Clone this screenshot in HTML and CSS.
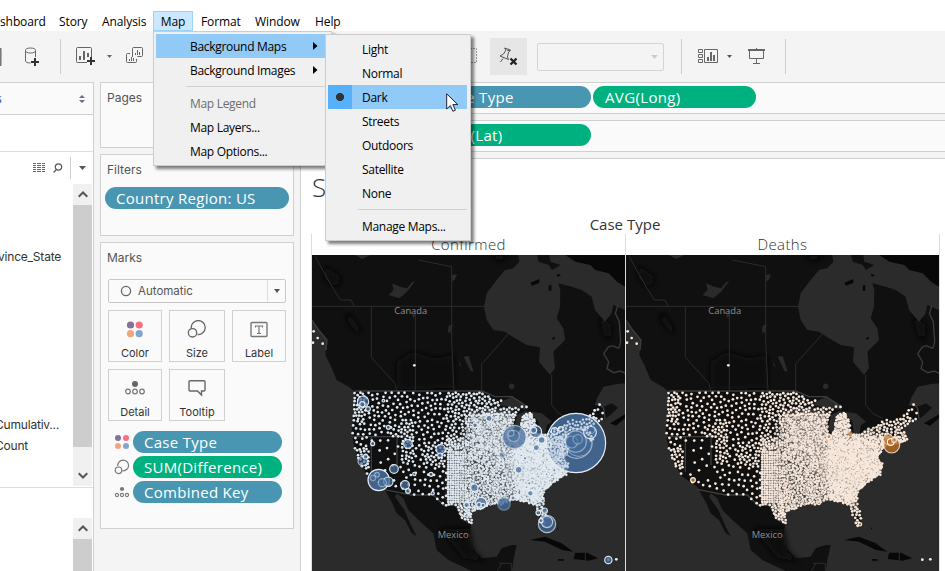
FILE: index.html
```html
<!DOCTYPE html>
<html lang="en">
<head>
<meta charset="utf-8">
<title>Worksheet</title>
<link rel="stylesheet" href="styles.css">
</head>
<body>
<div class="app">
  <nav class="menubar">
    <span class="m-dash">shboard</span><span class="m-story">Story</span><span class="m-analysis">Analysis</span><span class="m-map">Map</span><span class="m-format">Format</span><span class="m-window">Window</span><span class="m-help">Help</span>
  </nav>

  <div class="toolbar">
    <svg class="tool-cut" width="2" height="18"><path d="M0 .5H1V17.5H0" fill="#888" stroke="#666"/></svg>
    <svg class="tool-db" width="16" height="20" fill="none" stroke="#666"><ellipse cx="5.5" cy="3.5" rx="5" ry="2.5"/><path d="M.5 3.5V14c0 1 2 2 5 2M10.500 3.500V10"/><path d="M10 11v8M6 15h8" stroke="#333" stroke-width="2"/></svg>
    <i class="divider d1"></i>
    <svg class="tool-new" width="20" height="19" fill="none" stroke="#666"><path d="M11 15.500H1.500a1 1 0 0 1-1-1V1.500a1 1 0 0 1 1-1h13a1 1 0 0 1 1 1V10"/><path d="M4 13V9M8 13V4M12 10V6" stroke-width="2"/><path d="M15 10v8M11 14h8" stroke="#333" stroke-width="2"/></svg>
    <svg class="caret c1" width="5" height="3"><path d="M0 0h5L2.500 3z" fill="#666"/></svg>
    <svg class="tool-dup" width="18" height="17" fill="none" stroke="#666"><path d="M6.500 10V1.500a1 1 0 0 1 1-1h8a1 1 0 0 1 1 1v7a1 1 0 0 1-1 1h-4M4 6.500H1.500a1 1 0 0 0-1 1v7a1 1 0 0 0 1 1h8a1 1 0 0 0 1-1V12M3.500 14v-2M5.500 14v-4M7.500 14v-3M9.500 8V6M11.500 8V3M13.500 8V5"/></svg>
    <svg class="tool-dash" width="8" height="16" fill="none" stroke="#999"><path d="M0 .5H6.500V14.500H0" stroke-dasharray="2 1"/></svg>
    <span class="pin"><svg width="20" height="20" fill="none" stroke="#555"><path d="M5.500 1l6 2-1 1.500-1 .5-1 5 1 2.500L1 9l3.500-2L7 3zM4 11.500L1.500 15M8 3l3 1"/><path d="M11.500 11.500l6 6M17.500 11.500l-6 6" stroke="#222" stroke-width="2.300"/></svg></span>
    <span class="combo"><svg width="7" height="4"><path d="M0 0h7L3.500 4z" fill="#ccc"/></svg></span>
    <i class="divider d2"></i>
    <svg class="tool-show" width="21" height="15" fill="none" stroke="#666"><path d="M.5.500h4v3h-4zM.5 5.500h4v3h-4zM.5 10.500h4v3h-4zM6.500.500h13v13h-13z"/><path d="M10 12V8M13 12V3M16 12V6" stroke-width="2"/></svg>
    <svg class="caret c2" width="5" height="3"><path d="M0 0h5L2.500 3z" fill="#555"/></svg>
    <svg class="tool-present" width="18" height="17" fill="none" stroke="#666"><path d="M0 2h17" stroke-width="2"/><path d="M8.500 0v1M1.500 3v7.500h14V3M8.500 10.500V15M5 15.500h7"/></svg>
    <i class="divider d3"></i>
  </div>

  <main class="body">
    <aside class="data">
      <div class="source"><span>s</span><svg width="7" height="8" fill="#666e80"><path d="M0 3L3 0l3 3zM0 5h6L3 8z"/></svg></div>
      <div class="blank"></div>
      <div class="find">
        <svg width="12" height="10" fill="#666"><path d="M0 0h3v1H0zM4 0h4v1H4zM9 0h3v1H9zM0 2h3v1H0zM4 2h4v1H4zM9 2h3v1H9zM0 4h3v1H0zM4 4h4v1H4zM9 4h3v1H9zM0 6h3v1H0zM4 6h4v1H4zM9 6h3v1H9zM0 8h3v1H0zM4 8h4v1H4zM9 8h3v1H9z"/></svg>
        <svg class="lens" width="10" height="10" fill="none" stroke="#555" stroke-width="1.200"><circle cx="5.500" cy="4" r="3.200"/><path d="M3.500 6.500L.5 9.500"/></svg>
        <i></i>
        <svg class="fcaret" width="7" height="4"><path d="M0 0h7L3.500 4z" fill="#555"/></svg>
      </div>
      <div class="fields">
        <div class="names"><span class="n1">vince_State</span><span class="n2">Cumulativ...</span><span class="n3">Count</span></div>
        <div class="scroll">
          <span><svg width="10" height="7" fill="none" stroke="#555" stroke-width="2"><path d="M.7 5.700L5 1.500l4.300 4.200"/></svg></span><b></b><span class="down"><svg width="10" height="7" fill="none" stroke="#555" stroke-width="2"><path d="M.7 1.300L5 5.500l4.300-4.200"/></svg></span>
        </div>
      </div>
      <div class="params"><div class="scroll">
        <span><svg width="10" height="7" fill="none" stroke="#555" stroke-width="2"><path d="M.7 5.700L5 1.500l4.300 4.200"/></svg></span><b></b>
      </div></div>
    </aside>

    <section class="cards">
      <div class="card pages"><h4>Pages</h4></div>
      <div class="card filters"><h4>Filters</h4><div class="pill blue">Country Region: US</div></div>
      <div class="card marks">
        <h4>Marks</h4>
        <div class="marktype"><svg width="12" height="12" fill="none" stroke="#666" stroke-width="1.300"><circle cx="6" cy="6" r="4.600"/></svg><span>Automatic</span><em><svg width="6" height="4"><path d="M0 0h6L3 4z" fill="#555"/></svg></em></div>
        <div class="buttons">
          <div class="btn"><svg width="18" height="20"><circle cx="4.500" cy="5" r="3.600" fill="#857096"/><circle cx="13.200" cy="5" r="3.600" fill="#fa7080"/><circle cx="4.500" cy="13.700" r="3.600" fill="#f4a57c"/><circle cx="13.200" cy="13.700" r="3.600" fill="#82a5cd"/></svg><span>Color</span></div>
          <div class="btn"><svg width="20" height="20" fill="none" stroke="#666" stroke-width="1.300"><path d="M4.300 8.500A7 7 0 1 1 10.500 14.500"/><circle cx="5.500" cy="12.800" r="4.200"/></svg><span>Size</span></div>
          <div class="btn"><svg width="18" height="20" fill="none" stroke="#777" stroke-width="1.400"><rect x="1" y="2.500" width="16" height="14" rx="1"/><path d="M5.500 7.500V6h7v1.500M9 6v7.500M7 13.500h4" stroke-width="1.200"/></svg><span>Label</span></div>
          <div class="btn"><svg width="20" height="20" fill="none" stroke="#777" stroke-width="1.200"><circle cx="10" cy="5" r="3" fill="#666" stroke="none"/><circle cx="3" cy="12.500" r="2.300"/><circle cx="10" cy="12.500" r="2.300"/><circle cx="17" cy="12.500" r="2.300"/></svg><span>Detail</span></div>
          <div class="btn"><svg width="18" height="20" fill="none" stroke="#666" stroke-width="1.400"><path d="M2 1.700h14a1 1 0 0 1 1 1V11a1 1 0 0 1-1 1h-2.500v4L9.500 12H2a1 1 0 0 1-1-1V2.700a1 1 0 0 1 1-1z"/></svg><span>Tooltip</span></div>
        </div>
        <div class="enc"><svg width="16" height="16"><circle cx="4" cy="4" r="3" fill="#857096"/><circle cx="12" cy="4" r="3" fill="#fa7080"/><circle cx="4" cy="12" r="3" fill="#f4a57c"/><circle cx="12" cy="12" r="3" fill="#82a5cd"/></svg><div class="pill blue">Case Type</div></div>
        <div class="enc"><svg width="16" height="16" fill="none" stroke="#777" stroke-width="1.200"><path d="M3.800 7A5.400 5.400 0 1 1 8.500 11.800"/><circle cx="4.500" cy="11.300" r="3.300"/></svg><div class="pill green">SUM(Difference)</div></div>
        <div class="enc"><svg width="16" height="16" fill="none" stroke="#777" stroke-width="1.100"><circle cx="8" cy="5" r="2.100" fill="#777" stroke="none"/><circle cx="3" cy="11" r="1.600"/><circle cx="8" cy="11" r="1.600"/><circle cx="13" cy="11" r="1.600"/></svg><div class="pill blue">Combined Key</div></div>
      </div>
    </section>

    <section class="work">
      <div class="shelf"><div class="pill blue">Case Type</div><div class="pill green">AVG(Long)</div></div>
      <div class="shelf"><div class="pill green">AVG(Lat)</div></div>
      <div class="sheet">
        <h1>S</h1>
        <h2>Case Type</h2>
        <div class="panes">
          <div class="pane"><h3>Confirmed</h3><svg id="confirmed" viewBox="0 0 939 948"></svg></div>
          <div class="pane"><h3>Deaths</h3><svg id="deaths" viewBox="0 0 939 948"></svg></div>
        </div>
      </div>
    </section>
  </main>

  <div class="menu main">
    <div class="item hot">Background Maps<svg width="5" height="8"><path d="M0 0l4.500 4L0 8z"/></svg></div>
    <div class="item">Background Images<svg width="5" height="8"><path d="M0 0l4.500 4L0 8z"/></svg></div>
    <hr>
    <div class="item off">Map Legend</div>
    <div class="item">Map Layers...</div>
    <div class="item">Map Options...</div>
  </div>
  <div class="menu sub">
    <div class="item">Light</div>
    <div class="item">Normal</div>
    <div class="item hot"><i></i>Dark</div>
    <div class="item">Streets</div>
    <div class="item">Outdoors</div>
    <div class="item">Satellite</div>
    <div class="item">None</div>
    <hr>
    <div class="item">Manage Maps...</div>
  </div>
  <svg class="cursor" width="13" height="20"><path d="M.7.800V16l3.600-3.400 2.600 5.700 2.500-1.100-2.500-5.600h4.900z" fill="#fff" stroke="#223" stroke-width="1"/></svg>
</div>
<script src="map.js"></script>
</body>
</html>
```
FILE: map.js
```js
// Map geometry is stored at three units per pixel.
const land = 'M0 0H939V385L915 387 875 395 855 430 850 450 875 455 900 445 918 458 895 480 879 492 850 505 829 520 829 535 844 555 815 565 774 575 754 610 769 625 764 660 719 685 694 715 694 745 707 785 699 815 674 775 669 750 639 740 599 735 574 750 539 747 509 760 479 775 479 805 471 845 484 885 509 910 554 905 569 880 599 870 614 870 604 915 600 948H479L409 915 374 885 364 835 319 795 289 765 274 730 254 715 249 725 277 765 299 815 314 843 299 835 279 795 254 775 241 745 219 705 214 695 169 665 144 625 129 585 119 535 126 465 129 410 110 395 74 375 55 330 40 300 45 255 20 225 0 195Z';
const water = [
  'M619 0L622 20 604 40 579 45 554 75 524 115 516 155 524 195 544 225 579 230 609 250 644 270 684 277 681 320 714 360 729 340 724 290 759 255 754 220 734 190 744 155 745 105 739 85 779 95 809 105 839 125 849 165 879 200 899 175 904 150 939 165V0H712L715 20 745 30 720 45 710 30 680 20 675 0Z',
  'M229 120L245 105 240 85 265 95 285 100 300 82 310 78 285 110 262 130Z',
  'M420 60L435 58 428 75 420 78Z','M410 212L422 208 415 235 408 230Z','M300 180L315 175 305 190Z',
  'M455 305L470 303 485 350 475 347ZM440 315L448 335 443 333Z','M592 390a8 8 0 1 1 14 8a8 8 0 1 1-14-8',
  'M559 450L579 435 599 425 629 440 649 465 619 460 589 455Z',
  'M619 540L607 520 615 480 640 468 652 470 633 490 626 535Z',
  'M655 470L690 475 720 500 705 510 700 535 684 540 679 500Z',
  'M684 545L715 535 725 530 715 550 694 552ZM740 515L770 508 778 513 745 523Z',
  'M130 0L175 0 150 12Z'
];
const islands = [
  'M760 0L939 0V95L915 80 890 55 850 45 835 30 790 20Z',
  'M655 83L682 72 682 84 660 92ZM710 92l8-3v18h-8ZM720 250l8-5v8h-8ZM735 56l12 4-10 6Z',
  'M894 505L939 478V490L912 512Z',
  'M654 855L699 845 749 865 784 890 750 885 699 860ZM789 893L825 893 859 910 830 917 785 912ZM738 912l18 1v4h-18ZM735 815l4 8h-4Z'
];
const inlets = 'M855 55l45 40-6 5-42-38ZM775 25l50 12-5 20-40-6ZM900 100l30 20-5 30-20-15Z';
const borders = 'M0 154H519M178 154V307L249 385 254 407M310 180V407M319 15L419 35V255L426 407M591 235L509 327V407M719 360V450L740 475 770 490M10 5L54 85 85 135H117L127 154M560 925H598V948M820 890V917M555 950L570 925';
const usBorder = 'M129 408H509L549 425 600 425 645 455M214 703L299 720 364 720 395 750 430 750 455 795 479 805M850 450l10-5 15 15 4 32M0 195L20 225 45 255 42 285M119 545H310M178 545V650M255 545V630';
const shade = ['M255 320L300 290 370 310 425 300 425 400 255 405Z','M110 170l40 60-15 5-35-45Z','M40 30l50 40-20 30-35-30Z','M560 20l50-20h-80Z','M620 90l30 10-20 20Z','M860 180l40 30-5 50-20-20Z','M380 820l90 0 15 70 40 30-70-10Z'];
const us = [[127,413],[509,413],[539,430],[574,437],[559,455],[579,460],[619,455],[649,455],[619,470],[605,490],[605,535],[619,543],[626,515],[632,480],[659,473],[671,505],[674,535],[699,540],[724,520],[754,515],[769,497],[829,487],[844,470],[854,447],[867,447],[879,487],[849,505],[829,520],[844,555],[814,565],[774,575],[754,610],[769,625],[764,660],[719,685],[694,715],[694,745],[707,785],[694,815],[678,780],[669,750],[639,740],[599,735],[574,750],[539,747],[509,760],[479,775],[479,805],[449,790],[434,750],[404,753],[384,745],[364,720],[299,720],[249,700],[214,695],[169,665],[144,625],[129,585],[119,535],[126,465]];

let seed = 20200412;
function rand() {
  seed = (seed * 1664525 + 1013904223) >>> 0;
  return seed / 4294967296;
}
function inside(x, y) {
  let hit = false;
  for (let i = 0, j = us.length - 1; i < us.length; j = i++) {
    const [a, b] = us[i], [c, d] = us[j];
    if ((b > y) !== (d > y) && x < (c - a) * (y - b) / (d - b) + a) hit = !hit;
  }
  return hit;
}
function spacing(x, y) {
  if (x > 848 && y < 490) return 14;
  if (x > 560 && y < 475 && x < 645) return 9;
  if (x > 700 && y < 545) return 7.500;
  if (x > 670 && y > 740) return 7.500;
  if (x > 610) return 4.900;
  if (x > 462) return y < 480 - (x - 462) * .1 ? 8.500 : 5.800;
  if (x > 402) return y > 550 ? 6.500 : 9;
  if (x > 335 && y > 560 && y < 630) return 8.500;
  if (x > 270 && x < 305 && y > 490 && y < 620) return 8.500;
  if (x > 235 && x < 270 && y > 505 && y < 545) return 9;
  if (x > 170 && x < 270 && y > 540 && y < 680) return 23;
  if (x < 160 && y < 500) return 7.500;
  if (x < 190 && y > 580 && y < 640) return 7.500;
  if (y > 640) return 15;
  return 12.500;
}
const dots = [], cells = new Map();
function add(x, y, r) {
  const cx = Math.floor(x / 24), cy = Math.floor(y / 24);
  for (let i = -1; i < 2; i++) for (let j = -1; j < 2; j++)
    for (const p of cells.get((cx + i) + ',' + (cy + j)) || [])
      if ((p[0] - x) ** 2 + (p[1] - y) ** 2 < r * r) return;
  const key = cx + ',' + cy;
  if (!cells.has(key)) cells.set(key, []);
  cells.get(key).push([x, y]);
  dots.push([x, y]);
}
// Plains counties sit on a near-regular grid.
for (let y = 590; y < 745; y += 7.5) for (let x = 408; x < 462; x += 7.5) if (inside(x, y)) add(x + rand(), y + rand() * 1.5, 5);
for (let i = 0; i < 60000; i++) {
  const x = 115 + rand() * 770, y = 410 + rand() * 410;
  if (inside(x, y)) add(x, y, spacing(x, y));
}
dots.push([5,229],[17,249],[3,263],[32,266],[307,331],[913,913],[889,914]);

// Small gaps of basemap that show between the packed eastern counties.
const gaps = [];
while (gaps.length < 900) {
  const x = 440 + rand() * 320, y = 480 + rand() * 270;
  if (inside(x, y) && (x < 600 || rand() < .4)) gaps.push([x, y]);
}

function circles(list, r) {
  return list.map(p => '<circle cx="' + p[0].toFixed(1) + '" cy="' + p[1].toFixed(1) + '" r="' + (r || (p[0] > 462 ? 4.2 : 4.1)) + '"/>').join('');
}
function draw(id, light, fill, ring, bubbles) {
  let s = '<defs><clipPath id="' + id + 'Us"><path d="M' + us.map(p => p.join(' ')).join('L') + 'Z"/></clipPath><filter id="' + id + 'Soft"><feGaussianBlur stdDeviation="9"/></filter></defs>';
  s += '<rect width="939" height="948" fill="#2b2b2b"/><path fill="#101010" d="' + land + '"/>';
  s += '<path fill="#080808" filter="url(#' + id + 'Soft)" d="' + shade.join('') + '"/>';
  s += water.map(d => '<path fill="#2b2b2b" d="' + d + '"/>').join('');
  s += islands.map(d => '<path fill="#080808" d="' + d + '"/>').join('');
  s += '<path fill="#2b2b2b" d="' + inlets + '"/>';
  s += '<path fill="none" stroke="#2c2c2c" stroke-width="3" d="' + borders + '"/>';
  s += '<path fill="none" stroke="#3d3d3d" stroke-width="4" d="' + usBorder + '"/>';
  s += '<path fill="none" stroke="#3b3b3b" stroke-width="4" d="M918 150l-8 25 12 25 4 60-5 20M921 280l-20-8-12 4-14 20 15 25-5 20 20 12 20-5 20 10"/>';
  s += '<text x="247" y="178">Canada</text><text x="377" y="848">Mexico</text>';
  s += '<g fill="' + light + '">' + circles(dots) + '</g>';
  s += '<g clip-path="url(#' + id + 'Us)" fill="' + light + '"><g filter="url(#' + id + 'Soft)">';
  s += '<path fill-opacity=".25" d="M410 560L455 550 470 475 560 465 730 520 790 560 700 770 560 770 455 800 410 745Z"/>';
  s += '<path fill-opacity=".3" d="M490 480L600 475 610 540 700 545 780 580 780 640 700 700 680 745 600 735 560 640 500 600Z"/>';
  s += '<path fill-opacity=".5" d="M600 560L700 550 760 590 770 640 690 700 680 745 640 730 590 640Z"/></g></g>';
  s += '<g fill="#20242a" fill-opacity=".38">' + gaps.map(p => '<rect x="' + p[0].toFixed(1) + '" y="' + p[1].toFixed(1) + '" width="3" height="3"/>').join('') + '</g>';
  s += bubbles.map(b => '<circle cx="' + b[0] + '" cy="' + b[1] + '" r="' + b[2] + '" fill="' + fill + '" fill-opacity="' + (b[3] || .75) + '" stroke="' + ring + '" stroke-width="3.5" stroke-opacity="' + (b[4] || .95) + '"/>').join('');
  // Counties that sit above the largest bubbles in the northeast.
  if (id === 'confirmed') s += '<g fill="' + light + '" fill-opacity=".8">' + circles(dots.filter(p => p[0] > 705 && p[0] < 850 && p[1] < 640 && (p[0] - 798) ** 2 + (p[1] - 560) ** 2 > 1300), 3.6) + '</g>';
  document.getElementById(id).innerHTML = s;
}
const confirmed = [[813,189,89,.88,1],[815,190,45,.5,.55],[822,189,40,.4,.4],[812,185,32,.6,.5],[800,186,18,.6,.4],[818,178,14,.6,.4],[855,157,19],[858,150,11,.7,.4],[776,217,12,.7,.6],[628,171,35,.75,.55],[626,168,17,.6,.4],[618,160,9,.6,.4],[692,155,18],[686,151,9],[710,180,10],[174,65,17],[172,73,8],[189,87,7],[173,243,14,.6,.7],[182,230,7],[221,300,32,.88,1],[250,305,14],[232,308,12,.7,.5],[216,284,7,.7,.5],[204,294,8,.6,.4],[267,267,13],[300,315,13],[309,333,7],[309,192,13],[407,208,14],[405,226,7],[528,369,17],[522,374,7],[534,376,6],[597,372,19,.8,.3],[485,375,8],[508,323,11],[726,432,26,.7,.7],[726,426,17,.8,.7],[719,392,8],[700,398,7],[708,422,6],[641,269,10],[694,203,9],[592,225,9,.5,.5],[552,115,9],[510,136,7],[250,142,6],[203,191,6],[732,195,7],[749,153,10],[767,147,7],[676,340,8],[598,287,6],[548,328,6],[624,354,6],[910,540,11],[383,340,5],[378,283,6],[713,362,5],[328,282,5],[673,310,5],[700,290,4],[748,271,5],[535,220,5],[467,243,5],[660,235,5],[568,160,4],[487,188,4],[725,283,4],[702,318,4],[570,328,4],[235,62,4]].map(b => [b[0] - 21, b[1] + 375, ...b.slice(2)]);
const deaths = [[815,195,24,.85,.8],[805,178,15,.65,.4],[812,186,10,.5,1],[822,180,7,.6,.8],[690,162,7,.7,.3],[627,170,6],[219,300,7,.9,1],[720,433,5],[597,370,4],[850,163,5,.4,.5]].map(b => [b[0] - 18, b[1] + 375, ...b.slice(2)]);
draw('confirmed', '#e1e9f1', '#466c9a', '#e6eef7', confirmed);
draw('deaths', '#f7e8dc', '#b36a24', '#fff0e0', deaths);
```
FILE: styles.css
```css
* { box-sizing: border-box; }
body { margin: 0; overflow: hidden; font-family: "Open Sans", sans-serif; font-size: 12px; color: #000; }
h1, h2, h3, h4 { margin: 0; font-weight: 400; }
svg { display: block; flex: none; }
.app { position: relative; width: 945px; height: 571px; background: #fff; display: flex; flex-direction: column; overflow: hidden; }

.menubar { height: 31px; padding-top: 11px; display: flex; flex: none; line-height: 21px; white-space: nowrap; letter-spacing: -.1px; }
.menubar span { flex: none; }
.m-dash { width: 59px; }
.m-story { width: 43px; }
.m-analysis { width: 51px; }
.m-map { width: 40px; height: 20px; line-height: 19px; text-align: center; background: #cce8ff; border: 1px solid #99d1ff; }
.m-format { width: 62px; padding-left: 8px; }
.m-window { width: 60px; }
.m-help { width: 40px; }

.toolbar { height: 51px; flex: none; background: #f4f4f4; display: flex; align-items: center; }
.tool-db { margin-left: 23px; }
.divider { width: 1px; height: 35px; background: #ccc; flex: none; }
.d1 { margin-left: 19px; }
.tool-new { margin-left: 15px; }
.c1 { margin-left: 11px; }
.tool-dup { margin-left: 14px; margin-top: -3px; }
.tool-dash { margin-left: 326px; margin-top: -2px; }
.pin { width: 37px; height: 37px; margin-left: 12px; background: #e6e6e6; display: flex; align-items: center; justify-content: center; }
.combo { width: 127px; height: 28px; margin-left: 10px; border: 1px solid #d4d4d4; border-radius: 2px; display: flex; align-items: center; justify-content: flex-end; padding-right: 5px; }
.d2 { margin-left: 17px; }
.tool-show { margin-left: 16px; }
.c2 { margin-left: 8px; }
.tool-present { margin-left: 16px; }
.d3 { margin-left: 19px; }

.body { flex: 1; display: flex; min-height: 0; background: #f4f4f4; }
.data { width: 94px; flex: none; background: #fff; border-right: 1px solid #d0d0d0; display: flex; flex-direction: column; }
.source { height: 33px; flex: none; border-top: 1px solid #d0d0d0; border-bottom: 1px solid #d0d0d0; background: #fafafa; display: flex; align-items: center; justify-content: space-between; padding-right: 7px; color: #2a3fa0; }
.source span { margin-left: -4px; }
.blank { height: 37px; flex: none; border-bottom: 1px solid #ddd; }
.find { height: 32px; flex: none; display: flex; align-items: center; padding-left: 33px; }
.find i { width: 1px; height: 22px; background: #ccc; margin-left: 7px; }
.lens { margin-left: 8px; }
.fcaret { margin-left: 8px; }
.fields { height: 304px; flex: none; border-bottom: 1px solid #ddd; display: flex; justify-content: space-between; padding-bottom: 1px; }
.names { width: 73px; padding-top: 64px; display: flex; flex-direction: column; font: 12px/18px Inter, sans-serif; letter-spacing: -.2px; color: #333; white-space: nowrap; }
.n1 { margin-left: -2px; }
.n2 { margin: 150px 0 3px -5px; }
.n3 { margin-left: -5px; }
.scroll { width: 20px; border-right: 1px solid #fff; background: #f0f0f0; display: flex; flex-direction: column; }
.scroll span { height: 21px; flex: none; display: flex; align-items: center; justify-content: center; }
.scroll b { flex: 1; background: #cdcdcd; }
.scroll .down { height: 39px; align-items: flex-end; padding-bottom: 7px; }
.params { flex: 1; padding-top: 30px; display: flex; justify-content: flex-end; min-height: 0; }

.cards { width: 206px; flex: none; padding: 0 6px; display: flex; flex-direction: column; gap: 6px; }
.card { border: 1px solid #d0d0d0; background: #fafafa; flex: none; padding: 5px 4px 0; color: #555; }
.card h4 { font: 12px/20px Inter, sans-serif; font-weight: 400; padding-left: 2px; }
.pages { height: 66px; }
.filters { height: 82px; }
.filters .pill { margin-top: 7px; width: 184px; }
.marks { height: 287px; }
.pill { height: 22px; line-height: 23px; border-radius: 11px; padding-left: 11px; color: #fff; font-size: 15px; letter-spacing: .28px; white-space: nowrap; }
.blue { background: #4996b2; }
.green { background: #00b180; }
.marktype { margin: 11px 3px 0; height: 24px; border: 1px solid #c8c8c8; border-radius: 2px; display: flex; align-items: center; padding-left: 11px; font: 11.5px Inter, sans-serif; }
.marktype span { margin-left: 6px; flex: 1; }
.marktype em { width: 18px; height: 22px; border-left: 1px solid #ddd; display: flex; align-items: center; justify-content: center; }
.buttons { margin: 7px 3px 10px; display: grid; grid-template-columns: 54px 56px 54px; column-gap: 7px; row-gap: 7px; }
.btn { height: 52px; border: 1px solid #d0d0d0; display: flex; flex-direction: column; align-items: center; padding-top: 9px; font: 11px/16px Inter, sans-serif; color: #333; }
.btn span { margin-top: 5px; }
.enc { display: flex; align-items: center; margin: 0 0 3px 8px; gap: 3px; }
.enc svg { margin-left: 1px; }
.enc .pill { width: 149px; }

.work { flex: 1; display: flex; flex-direction: column; min-width: 0; }
.shelf { height: 32px; margin-bottom: 6px; flex: none; border: solid #d0d0d0; border-width: 1px 0; background: #fafafa; display: flex; gap: 2px; padding: 3px 0 0 128px; }
.shelf .pill { width: 163px; padding-left: 12px; letter-spacing: .36px; }
.sheet { flex: 1; background: #fff; border: solid #d0d0d0; border-width: 1px 0 0 1px; display: flex; flex-direction: column; }
h1 { font-size: 26px; font-weight: 300; line-height: 34px; height: 55px; padding: 11px 0 0 11px; color: #333; }
h2 { font-size: 15px; line-height: 20px; text-align: center; width: 648px; color: #333; }
.panes { display: flex; margin-left: 10px; width: 629px; border-right: 1px solid #ddd; }
.pane { width: 314px; border-left: 1px solid #ddd; }
h3 { height: 21px; line-height: 20px; font-size: 15px; font-weight: 300; letter-spacing: .4px; text-align: center; color: #333; }
.pane svg { width: 313px; height: 316px; }
.pane text { font: 28px "Open Sans", sans-serif; fill: #909090; }

.menu { position: absolute; background: #f0f0f0; border: 1px solid #ccc; box-shadow: 3px 3px 3px rgba(0,0,0,.5); padding: 2px; letter-spacing: -.3px; }
.item { height: 24px; line-height: 25px; position: relative; white-space: nowrap; }
.item svg { position: absolute; top: 8px; left: 157px; }
.menu hr { height: 1px; border: 0; margin: 4px 0; background: #d0d0d0; }
.main { left: 153px; top: 31px; width: 179px; height: 135px; }
.main .item { padding-left: 34px; }
.main hr { margin-left: 30px; }
.sub { left: 325px; top: 34px; width: 146px; height: 207px; }
.sub .item { padding-left: 34px; margin-right: 1px; }
.sub hr { margin-left: 30px; margin-right: 1px; }
.item.hot { background: #91c9f7; }
.item.off { color: #6d6d6d; }
.item i { position: absolute; left: 0; top: 0; width: 24px; height: 24px; background: radial-gradient(circle, #333 3.700px, #56b0fa 4.400px); }
.cursor { position: absolute; left: 446px; top: 93px; }
```
